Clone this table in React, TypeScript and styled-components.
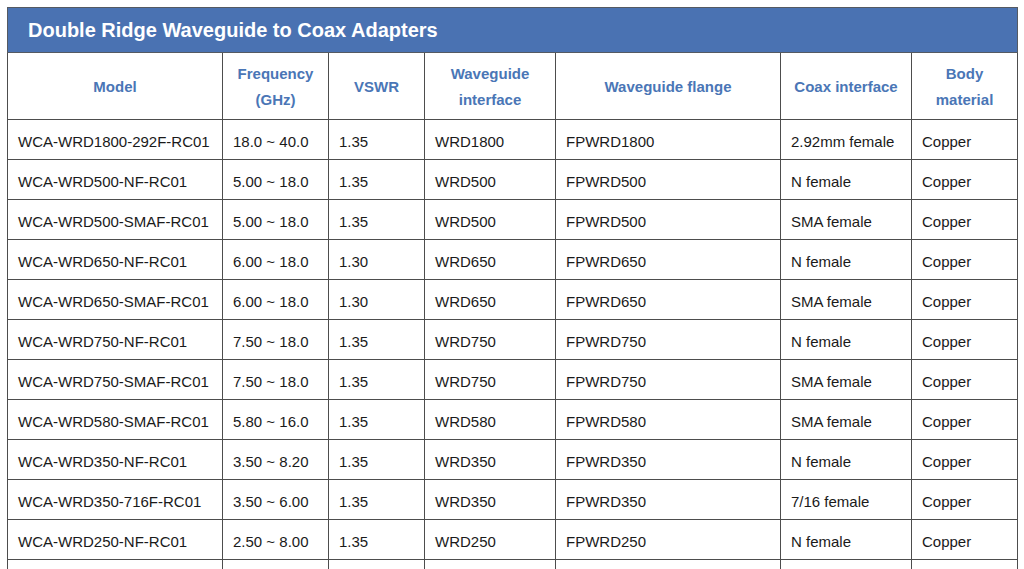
import styled, { createGlobalStyle } from "styled-components";

const GlobalStyle = createGlobalStyle`
  html, body {
    margin: 0;
    padding: 0;
    background: #ffffff;
    overflow: hidden;
  }
  body {
    font-family: "Liberation Sans", Arial, sans-serif;
  }
`;

const Page = styled.div`
  padding: 7px 0 0 7px;
  width: 1024px;
  height: 569px;
  box-sizing: border-box;
  overflow: hidden;
`;

const Table = styled.table`
  width: 1010px;
  border-collapse: collapse;
  table-layout: fixed;
`;

const TitleCell = styled.th`
  height: 44px;
  background: #4a72b2;
  color: #ffffff;
  font-size: 20px;
  font-weight: bold;
  text-align: left;
  padding: 0 0 0 20px;
  border: 1px solid #555a62;
`;

const HeadCell = styled.th`
  height: 64px;
  color: #4a76b6;
  font-size: 15px;
  font-weight: bold;
  line-height: 26px;
  text-align: center;
  padding: 2px 4px 0;
  border: 1px solid #4d4d4d;
`;

const Cell = styled.td`
  height: 35px;
  color: #1a1a1a;
  font-size: 15px;
  padding: 4px 0 0 10px;
  border: 1px solid #4d4d4d;
  white-space: nowrap;
  overflow: hidden;
`;

const columns: { label: string[]; width: number }[] = [
  { label: ["Model"], width: 215 },
  { label: ["Frequency", "(GHz)"], width: 106 },
  { label: ["VSWR"], width: 96 },
  { label: ["Waveguide", "interface"], width: 131 },
  { label: ["Waveguide flange"], width: 225 },
  { label: ["Coax interface"], width: 131 },
  { label: ["Body", "material"], width: 106 },
];

const rows: string[][] = [
  ["WCA-WRD1800-292F-RC01", "18.0 ~ 40.0", "1.35", "WRD1800", "FPWRD1800", "2.92mm female", "Copper"],
  ["WCA-WRD500-NF-RC01", "5.00 ~ 18.0", "1.35", "WRD500", "FPWRD500", "N female", "Copper"],
  ["WCA-WRD500-SMAF-RC01", "5.00 ~ 18.0", "1.35", "WRD500", "FPWRD500", "SMA female", "Copper"],
  ["WCA-WRD650-NF-RC01", "6.00 ~ 18.0", "1.30", "WRD650", "FPWRD650", "N female", "Copper"],
  ["WCA-WRD650-SMAF-RC01", "6.00 ~ 18.0", "1.30", "WRD650", "FPWRD650", "SMA female", "Copper"],
  ["WCA-WRD750-NF-RC01", "7.50 ~ 18.0", "1.35", "WRD750", "FPWRD750", "N female", "Copper"],
  ["WCA-WRD750-SMAF-RC01", "7.50 ~ 18.0", "1.35", "WRD750", "FPWRD750", "SMA female", "Copper"],
  ["WCA-WRD580-SMAF-RC01", "5.80 ~ 16.0", "1.35", "WRD580", "FPWRD580", "SMA female", "Copper"],
  ["WCA-WRD350-NF-RC01", "3.50 ~ 8.20", "1.35", "WRD350", "FPWRD350", "N female", "Copper"],
  ["WCA-WRD350-716F-RC01", "3.50 ~ 6.00", "1.35", "WRD350", "FPWRD350", "7/16 female", "Copper"],
  ["WCA-WRD250-NF-RC01", "2.50 ~ 8.00", "1.35", "WRD250", "FPWRD250", "N female", "Copper"],
  ["", "", "", "", "", "", ""],
];

export default function App() {
  return (
    <Page>
      <GlobalStyle />
      <Table>
        <colgroup>
          {columns.map((c, i) => (
            <col key={i} style={{ width: c.width }} />
          ))}
        </colgroup>
        <thead>
          <tr>
            <TitleCell colSpan={7}>Double Ridge Waveguide to Coax Adapters</TitleCell>
          </tr>
          <tr>
            {columns.map((c, i) => (
              <HeadCell key={i}>
                {c.label.map((l, j) => (
                  <div key={j}>{l}</div>
                ))}
              </HeadCell>
            ))}
          </tr>
        </thead>
        <tbody>
          {rows.map((r, i) => (
            <tr key={i}>
              {r.map((v, j) => (
                <Cell key={j}>{v}</Cell>
              ))}
            </tr>
          ))}
        </tbody>
      </Table>
    </Page>
  );
}
